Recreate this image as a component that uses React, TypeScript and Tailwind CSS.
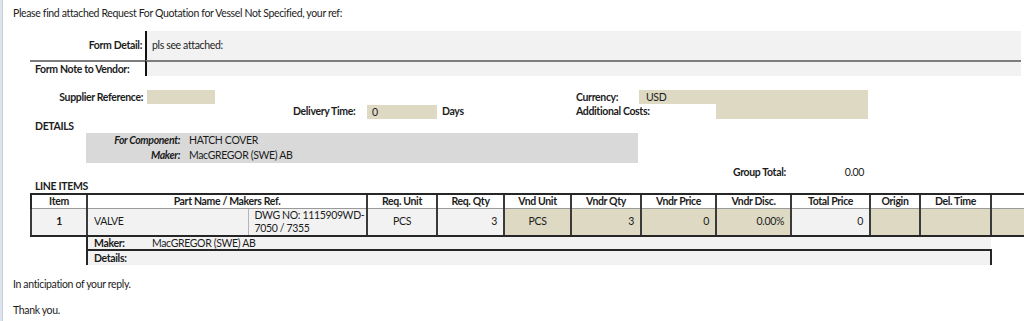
import React from "react";

type Cell = {
  text?: React.ReactNode;
  align?: "left" | "center" | "right";
  tan?: boolean;
  bold?: boolean;
};

const TAN = "bg-[#ddd9c3]";
const LIGHT = "bg-[#f2f2f2]";

// widths of every column of the line items grid, left to right
const colWidths = [56, 161, 119, 70, 67, 67, 70, 75, 75, 79, 50, 71, 60];

const headers: { label: string; span?: number }[] = [
  { label: "Item" },
  { label: "Part Name / Makers Ref.", span: 2 },
  { label: "Req. Unit" },
  { label: "Req. Qty" },
  { label: "Vnd Unit" },
  { label: "Vndr Qty" },
  { label: "Vndr Price" },
  { label: "Vndr Disc." },
  { label: "Total Price" },
  { label: "Origin" },
  { label: "Del. Time" },
  { label: "" },
];

const lineItem: Cell[] = [
  { text: "1", align: "center", bold: true },
  { text: "VALVE" },
  {
    text: (
      <>
        DWG NO: 1115909WD-
        <br />
        7050 / 7355
      </>
    ),
  },
  { text: "PCS", align: "center" },
  { text: "3", align: "right" },
  { text: "PCS", align: "center", tan: true },
  { text: "3", align: "right", tan: true },
  { text: "0", align: "right", tan: true },
  { text: "0.00%", align: "right", tan: true },
  { text: "0", align: "right" },
  { tan: true },
  { tan: true },
  { tan: true },
];

function alignClass(align?: string) {
  if (align === "center") return "text-center";
  if (align === "right") return "text-right";
  return "text-left";
}

function LineItemsTable() {
  return (
    <table className="table-fixed border-collapse w-[1020px]">
      <colgroup>
        {colWidths.map((w, i) => (
          <col key={i} style={{ width: w }} />
        ))}
      </colgroup>
      <tbody>
        <tr className="h-[14px]">
          {headers.map((h, i) => (
            <th
              key={i}
              colSpan={h.span}
              className={`p-0 font-bold text-center leading-[12px] border-t-2 border-b border-b-[#9a9a9a] border-t-[#262626] ${
                i === 0 ? "border-l-2 border-l-[#262626]" : "border-l-2 border-l-[#3a3a3a]"
              }`}
            >
              {h.label}
            </th>
          ))}
        </tr>
        <tr className="h-[26px]">
          {lineItem.map((c, i) => (
            <td
              key={i}
              className={`p-0 px-[6px] leading-[13px] whitespace-nowrap border-b-2 border-b-[#262626] ${
                c.tan ? TAN : LIGHT
              } ${alignClass(c.align)} ${c.bold ? "font-bold" : ""} ${
                i === 2 ? "border-l border-l-[#b5b5b5]" : "border-l-2 border-l-[#3a3a3a]"
              }`}
            >
              {c.text}
            </td>
          ))}
        </tr>
        <tr className="h-[14px]">
          <td className="p-0" />
          <td
            colSpan={11}
            className={`p-0 pl-[6px] leading-[12px] ${LIGHT} border-l-2 border-l-[#262626] border-b-2 border-b-[#262626]`}
          >
            <span className="inline-block w-[58px] font-bold">Maker:</span>
            MacGREGOR (SWE) AB
          </td>
          <td className="p-0" />
        </tr>
        <tr className="h-[15px]">
          <td className="p-0" />
          <td
            colSpan={11}
            className={`p-0 pl-[6px] leading-[12px] font-bold ${LIGHT} border-l-2 border-l-[#262626] border-r-2 border-r-[#262626]`}
          >
            Details:
          </td>
          <td className="p-0" />
        </tr>
      </tbody>
    </table>
  );
}

export default function App() {
  return (
    <div className="w-[1024px] h-[321px] overflow-hidden bg-white flex font-[Lato,sans-serif] text-[10.5px] tracking-[-0.35px] leading-[15px] text-[#1c1c1c]">
      <div className="w-[3px] shrink-0 bg-[#dde4ec] border-r border-r-[#c6cfd9]" />

      <div className="flex-1 min-w-0 flex flex-col pl-[10px]">
        <p className="mt-[6px]">
          Please find attached Request For Quotation for Vessel Not Specified, your ref:
        </p>

        {/* form detail / note */}
        <div className="ml-[17px] mt-[10px] w-[991px] grid grid-cols-[115px_1fr]">
          <div className="h-[29px] flex items-center justify-end pr-[3px] font-bold">Form Detail:</div>
          <div className={`h-[29px] flex items-center pl-[5px] border-l-2 border-l-[#111] ${LIGHT}`}>
            pls see attached:
          </div>
          <div className="h-[16px] flex items-center pl-[5px] font-bold border-t-2 border-t-[#7d7d7d]">
            Form Note to Vendor:
          </div>
          <div className={`h-[16px] border-t-2 border-t-[#7d7d7d] border-l-2 border-l-[#111] ${LIGHT}`} />
        </div>

        {/* references, delivery, currency */}
        <div className="ml-[17px] mt-[14px] flex flex-col">
          <div className="flex h-[14px] items-center">
            <div className="w-[113px] text-right font-bold">Supplier Reference:</div>
            <div className={`ml-[4px] w-[68px] h-[14px] ${TAN}`} />
            <div className="w-[361px]" />
            <div className="w-[63px] font-bold">Currency:</div>
            <div className={`w-[229px] h-[14px] pl-[7px] leading-[14px] ${TAN}`}>USD</div>
          </div>
          <div className="flex h-[15px] items-center">
            <div className="w-[263px]" />
            <div className="w-[74px] font-bold">Delivery Time:</div>
            <div className={`w-[70px] h-[14px] mt-[1px] pl-[5px] leading-[14px] ${TAN}`}>0</div>
            <div className="w-[139px] pl-[5px] font-bold">Days</div>
            <div className="w-[140px] font-bold">Additional Costs:</div>
            <div className={`w-[152px] h-[15px] self-start ${TAN}`} />
          </div>
        </div>

        <div className="ml-[22px] h-[14px] leading-[14px] font-bold">DETAILS</div>

        <div className="ml-[73px] w-[552px] h-[30px] bg-[#d9d9d9] flex flex-col">
          <div className="flex h-[15px] items-center">
            <div className="w-[94px] text-right font-bold italic">For Component:</div>
            <div className="ml-[9px]">HATCH COVER</div>
          </div>
          <div className="flex h-[15px] items-center">
            <div className="w-[94px] text-right font-bold italic">Maker:</div>
            <div className="ml-[9px]">MacGREGOR (SWE) AB</div>
          </div>
        </div>

        <div className="mt-[2px] h-[14px] flex items-center">
          <div className="ml-[720px] w-[80px] font-bold">Group Total:</div>
          <div className="w-[51px] text-right">0.00</div>
        </div>

        <div className="ml-[22px] h-[14px] leading-[14px] font-bold">LINE ITEMS</div>

        <div className="ml-[17px]">
          <LineItemsTable />
        </div>

        <p className="mt-[12px]">In anticipation of your reply.</p>
        <p className="mt-[11px]">Thank you.</p>
      </div>
    </div>
  );
}
